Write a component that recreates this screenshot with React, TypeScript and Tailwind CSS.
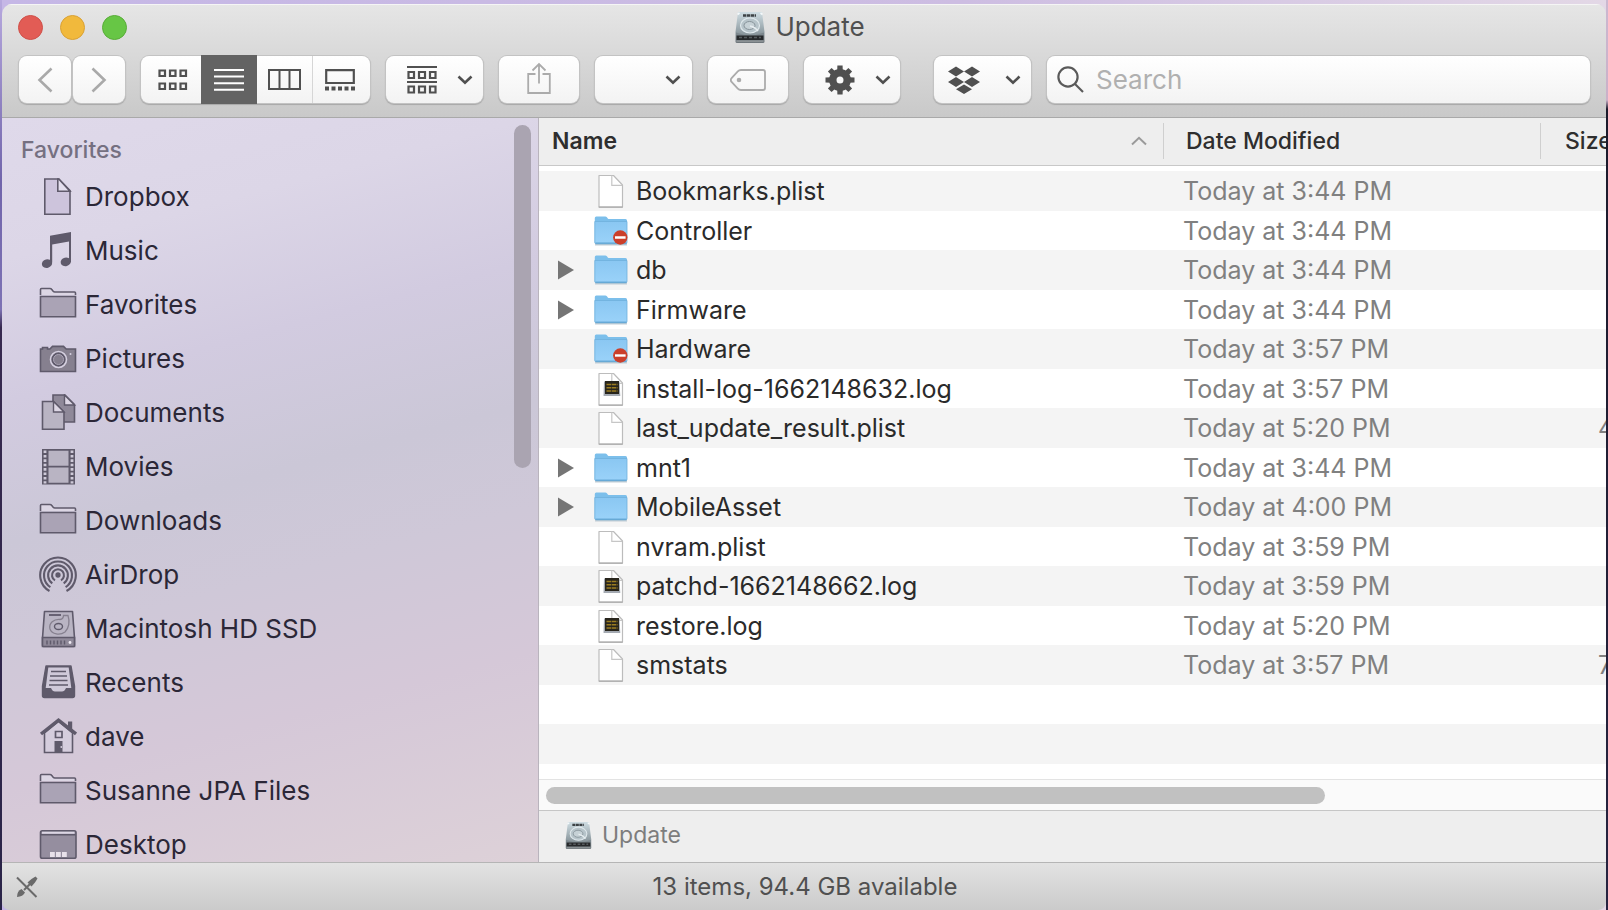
import type { ReactNode } from "react";
import clsx from "clsx";

type FileKind = "doc" | "folder" | "locked" | "log";

interface FileRow {
  name: string;
  kind: FileKind;
  date: string;
  size?: string;
}

const files: FileRow[] = [
  { name: "Bookmarks.plist", kind: "doc", date: "Today at 3:44 PM" },
  { name: "Controller", kind: "locked", date: "Today at 3:44 PM" },
  { name: "db", kind: "folder", date: "Today at 3:44 PM" },
  { name: "Firmware", kind: "folder", date: "Today at 3:44 PM" },
  { name: "Hardware", kind: "locked", date: "Today at 3:57 PM" },
  { name: "install-log-1662148632.log", kind: "log", date: "Today at 3:57 PM" },
  { name: "last_update_result.plist", kind: "doc", date: "Today at 5:20 PM", size: "4" },
  { name: "mnt1", kind: "folder", date: "Today at 3:44 PM" },
  { name: "MobileAsset", kind: "folder", date: "Today at 4:00 PM" },
  { name: "nvram.plist", kind: "doc", date: "Today at 3:59 PM" },
  { name: "patchd-1662148662.log", kind: "log", date: "Today at 3:59 PM" },
  { name: "restore.log", kind: "log", date: "Today at 5:20 PM" },
  { name: "smstats", kind: "doc", date: "Today at 3:57 PM", size: "7" },
];

/* ---------- sidebar icons, all on a 38px box ---------- */

const line = "#5f5a6b";
const fill = "#aaa3b5";

const folderShape = (
  <>
    <path d="M1.5 9V3.5q0-1 1-1h8.5q1 0 1.6.8l1.6 2q.6.7 1.6.7h19.7q1 0 1 1V9" fill="#dcd6e4" stroke={line} strokeWidth="1.6" />
    <path d="M1.5 10.5h35v20.3H1.5z" fill={fill} stroke={line} strokeWidth="1.6" />
  </>
);

const sidebar: { label: string; icon: ReactNode }[] = [
  {
    label: "Dropbox",
    icon: (
      <>
        <path d="M5.8 1h14L31 12.5v23.7H5.8z" fill="#cdc4dc" stroke={line} strokeWidth="1.6" />
        <path d="M18.8 1v12.3H31L19.8 1z" fill="#e4dfee" stroke={line} strokeWidth="1.6" />
      </>
    ),
  },
  {
    label: "Music",
    icon: (
      <>
        <path d="M11 3.8 32 0v30h-2V9.6L13.2 12.4v18H11z" fill={line} />
        <ellipse cx="8" cy="31.6" rx="5.2" ry="4.3" fill={line} transform="rotate(-15 8 31.6)" />
        <ellipse cx="26.8" cy="29.8" rx="5.2" ry="4.3" fill={line} transform="rotate(-15 26.8 29.8)" />
      </>
    ),
  },
  { label: "Favorites", icon: folderShape },
  {
    label: "Pictures",
    icon: (
      <>
        <path d="M1.5 9h2V7.5h5V9h2.4l2.6-2.6h11L27.2 9h9.3v22.5h-35z" fill="#86808f" stroke={line} strokeWidth="1.6" />
        <circle cx="19.5" cy="19.5" r="8" fill={line} stroke="#d6d0e0" strokeWidth="1.6" />
        <circle cx="19.5" cy="19.5" r="5" fill="#86808f" stroke="#aaa3b5" strokeWidth="1" />
        <circle cx="31.5" cy="14" r="1" fill="#d6d0e0" />
      </>
    ),
  },
  {
    label: "Documents",
    icon: (
      <>
        <path d="M14 1h12l9.5 9.5V28H14z" fill="#8f8999" stroke={line} strokeWidth="1.6" />
        <path d="M25.5 1v10h10z" fill="#dcd6e4" stroke={line} strokeWidth="1.4" />
        <path d="M3.5 7.5h11L25 18v17.2H3.5z" fill="#b9b4c3" stroke={line} strokeWidth="1.6" />
        <path d="M14.5 7.5V18H25z" fill="#dcd6e4" stroke={line} strokeWidth="1.4" />
      </>
    ),
  },
  {
    label: "Movies",
    icon: (
      <>
        <path d="M3 1h33v35.500H3z" fill={line} />
        <path d="M9.500 2.800h20v15h-20zM9.500 19.600h20v15.100h-20z" fill="#b9b4c3" />
        <path d="M6 2.500v33M33 2.500v33" stroke="#cfcad9" strokeWidth="2.8" strokeDasharray="2.6 1.8" />
      </>
    ),
  },
  { label: "Downloads", icon: folderShape },
  {
    label: "AirDrop",
    icon: (
      <g fill="none" stroke={line} strokeWidth="2.1">
        <circle cx="19" cy="19" r="1.6" fill={line} />
        <path d="M16 24.4a6 6 0 1 1 6 0" />
        <path d="M13.300 27.4a9.900 9.900 0 1 1 11.400 0" />
        <path d="M11.400 31.200a14 14 0 1 1 15.200 0" />
        <path d="M10.500 35a17.800 17.800 0 1 1 17 0" />
      </g>
    ),
  },
  {
    label: "Macintosh HD SSD",
    icon: (
      <>
        <path d="M5.500 1.500h28l2 26.500v7.500q0 1-1 1h-30q-1 0-1-1V28z" fill="#b9b4c3" stroke={line} strokeWidth="1.6" strokeLinejoin="round" />
        <path d="M3.500 27.500h32v9h-32z" fill="#8f8999" stroke={line} strokeWidth="1.6" />
        <path d="M8 30.500v4M11.500 30.500v4M15 30.500v4M18.500 30.500v4M22 30.500v4M25.500 30.500v4" stroke={line} strokeWidth="1.4" />
        <circle cx="31" cy="32.5" r="1.4" fill="#efeaf3" />
        <path d="M10 5h12" stroke={line} strokeWidth="1.8" />
        <path d="M29 5.500c2 6 1 13-3 16.500-5 3.500-13 2.500-15-3-1.500-6 4-10 10-9.500 3-.4 3.500-2 3.500-4z" fill="none" stroke="#86808f" strokeWidth="1.3" />
        <ellipse cx="19.5" cy="16.5" rx="4" ry="3" fill="none" stroke={line} strokeWidth="1.4" />
      </>
    ),
  },
  {
    label: "Recents",
    icon: (
      <>
        <path d="M7 2h25l3.500 20v9.500q0 2-2 2h-28q-2 0-2-2V22z" fill={line} stroke={line} strokeWidth="1.4" strokeLinejoin="round" />
        <path d="M9.300 3.500h20.400l2.600 20.500H27q-1.500 3.500-4 3.500h-7q-2.500 0-4-3.500H6.700z" fill="#cfc9d9" />
        <path d="M12 7.500h15M11 12h17M10.500 16.500h18M10 21h19" stroke={line} strokeWidth="1.6" />
      </>
    ),
  },
  {
    label: "dave",
    icon: (
      <>
        <path d="M5.500 15 19.500 3.500 33.500 15v19.500h-28z" fill="#d5cddd" stroke={line} strokeWidth="1.6" />
        <path d="M29 3.500h4.200V12L29 8.500z" fill={line} />
        <path d="M2 16 19.500 2.200 37 16" fill="none" stroke={line} strokeWidth="3.4" />
        <path d="M16.500 13.500h6.500v6h-6.500z" fill="none" stroke={line} strokeWidth="1.7" />
        <path d="M15.500 23h8v11.500h-8z" fill={line} />
        <circle cx="22.3" cy="29" r=".9" fill="#d5cddd" />
      </>
    ),
  },
  { label: "Susanne JPA Files", icon: folderShape },
  {
    label: "Desktop",
    icon: (
      <>
        <rect x="1.5" y="4.8" width="35.5" height="27.5" rx="1.8" fill="#958e9f" stroke={line} strokeWidth="1.6" />
        <path d="M3 6.800h32.500" stroke="#dcd6e4" strokeWidth="2" />
        <path d="M2 8.800h34.500" stroke={line} strokeWidth="1.4" />
        <path d="M11 26h4.800v5H11zM17 26h4.800v5H17zM23 26h4.800v5H23z" fill="#e8e1ea" />
      </>
    ),
  },
];

/* ---------- file and drive icons ---------- */

const DriveIcon = ({ className }: { className: string }) => (
  <svg viewBox="0 0 30 33" className={className} aria-hidden="true">
    <defs>
      <linearGradient id="drive" x1="0" y1="0" x2="0" y2="1">
        <stop offset="0" stopColor="#cfdde3" />
        <stop offset=".6" stopColor="#95a2a8" />
        <stop offset="1" stopColor="#6e767b" />
      </linearGradient>
    </defs>
    <path d="M3 1h24l2.500 20v9.500q0 1.500-1.500 1.500H2Q.5 32 .5 30.500V21z" fill="url(#drive)" />
    <path d="M2.500 3.500 4.500 2M27.500 3.500l-2-1.500" stroke="#f4f8fa" strokeWidth="1.6" />
    <ellipse cx="15" cy="14.5" rx="9.5" ry="7.5" fill="#b7c4ca" stroke="#dfe8ec" strokeWidth="1.2" />
    <ellipse cx="14.500" cy="14.500" rx="5.500" ry="4" fill="#c6d1d6" stroke="#87939a" strokeWidth="1" />
    <path d="M15 15q5 1 8 5" fill="none" stroke="#e6edf0" strokeWidth="1.6" />
    <path d="M8 4.500h13" stroke="#3d4245" strokeWidth="2.6" strokeDasharray="3.4 .6" />
    <path d="M1 21.500q14 5.500 28 0v3.500H1z" fill="#7b868c" />
    <path d="M1.500 24.500h27v4.500h-27z" fill="#26282a" />
    <path d="M4 26.500h22" stroke="#565b5e" strokeWidth="1.6" strokeDasharray="3 2" />
    <path d="M1.500 30.300h27" stroke="#8b9194" strokeWidth="1.6" />
  </svg>
);

const FileIcon = ({ kind }: { kind: FileKind }) => {
  if (kind === "folder" || kind === "locked") {
    return (
      <svg viewBox="0 0 34 34" className="size-[34px] shrink-0" aria-hidden="true">
        <defs>
          <linearGradient id="folder" x1="0" y1="0" x2="0" y2="1">
            <stop offset="0" stopColor="#8ac7f2" />
            <stop offset="1" stopColor="#9ad2f9" />
          </linearGradient>
        </defs>
        <path d="M1 30.500h32" stroke="#c3cdd4" strokeWidth="2" />
        <path d="M.8 4q0-1.500 1.500-1.500h9q1 0 1.600.8l.9 1.200q.5.600 1.500.600h16.200q1.500 0 1.500 1.500V29H.8z" fill="#7cbfeb" />
        <path d="M.8 7.500h32.200v20.800q0 1.500-1.500 1.500H2.300q-1.500 0-1.500-1.500z" fill="url(#folder)" stroke="#6fb0dc" strokeWidth=".8" />
        <path d="M1.500 29.200h31" stroke="#5fa3d1" strokeWidth="1.2" />
        {kind === "locked" && (
          <>
            <circle cx="26.3" cy="23.5" r="7.2" fill="#cb3f2b" />
            <path d="M21 23.500h10.600" stroke="#fff" strokeWidth="2.4" />
          </>
        )}
      </svg>
    );
  }
  return (
    <svg viewBox="0 0 34 34" className="size-[34px] shrink-0" aria-hidden="true">
      <path d="M5 1.500h14.500L28.500 11v22H5z" fill="#fff" stroke="#bcbcbc" strokeWidth="1.2" strokeLinejoin="round" />
      <path d="M4.800 33.200h23.900" stroke="#a9a9a9" strokeWidth="1.2" />
      <path d="M17.800 1.500v9.800h10.400" fill="none" stroke="#c6c6c6" strokeWidth="1.2" />
      {kind === "log" && (
        <>
          <path d="M10 9.500h15.500l.8 14.500H9.500z" fill="#a4aab2" />
          <path d="M11 9h14v13H11z" fill="#28251c" />
          <path d="M12.500 12.500h11M12.500 15.800h11M12.500 19.100h11" stroke="#9a7c20" strokeWidth="1.5" strokeDasharray="4.500 .6" />
        </>
      )}
    </svg>
  );
};

/* ---------- toolbar ---------- */

const buttonFace =
  "flex h-[47px] shrink-0 items-center rounded-lg bg-linear-to-b from-white to-[#f3f3f3] shadow-[0_0_0_1px_#c3c3c3,0_1px_1px_1px_#a8a8a8]";

const ToolButton = ({ label, className, children }: { label: string; className: string; children?: ReactNode }) => (
  <button type="button" aria-label={label} className={clsx(buttonFace, className)}>
    {children}
  </button>
);

const Chevron = () => (
  <svg viewBox="0 0 16 10" className="h-[10px] w-4" aria-hidden="true">
    <path d="M1.500 1.500 8 7.800l6.500-6.300" fill="none" stroke="#505050" strokeWidth="2.6" />
  </svg>
);

const gearTeeth = [0, 45, 90, 135, 180, 225, 270, 315];

const Toolbar = () => (
  <div className="flex gap-4 pt-[6px] pr-4 pb-[14px] pl-[17px]">
    <div className="flex gap-[2px]">
      <ToolButton label="Back" className="w-[52px] justify-center">
        <svg viewBox="0 0 16 26" className="h-[26px] w-4" aria-hidden="true">
          <path d="M14.500 1.500 2.500 13l12 11.500" fill="none" stroke="#a9a9a9" strokeWidth="2.6" />
        </svg>
      </ToolButton>
      <ToolButton label="Forward" className="w-[52px] justify-center">
        <svg viewBox="0 0 16 26" className="h-[26px] w-4" aria-hidden="true">
          <path d="m1.500 1.500 12 11.500-12 11.500" fill="none" stroke="#a9a9a9" strokeWidth="2.6" />
        </svg>
      </ToolButton>
    </div>

    <div className={buttonFace} role="group" aria-label="View">
      <button type="button" aria-label="Icons" className="flex h-full w-[60px] items-center justify-center pl-1">
        <svg viewBox="0 0 30 22" className="h-[22px] w-[30px]" fill="none" stroke="#505050" strokeWidth="2.2" aria-hidden="true">
          <path d="M1.500 1.500H7V7H1.500zM12 1.500h5.500V7H12zM22.500 1.500H28V7h-5.500zM1.500 14.500H7V20H1.500zM12 14.500h5.500V20H12zM22.500 14.500H28V20h-5.500z" />
        </svg>
      </button>
      <button type="button" aria-label="List" aria-pressed="true" className="flex h-[49px] w-14 items-center justify-center bg-[#636363]">
        <svg viewBox="0 0 30 22" className="h-[22px] w-[30px]" stroke="#fff" strokeWidth="2" aria-hidden="true">
          <path d="M0 1h30M0 7.600h30M0 14.200h30M0 20.800h30" />
        </svg>
      </button>
      <button type="button" aria-label="Columns" className="flex h-full w-14 items-center justify-center border-r border-[#d6d6d6]">
        <svg viewBox="0 0 33 21" className="h-[21px] w-[33px]" fill="none" stroke="#505050" strokeWidth="2" aria-hidden="true">
          <path d="M1 1h31v19H1zM11.500 1v19M21.500 1v19" />
        </svg>
      </button>
      <button type="button" aria-label="Gallery" className="flex h-full w-[57px] items-center justify-center pr-1">
        <svg viewBox="0 0 30 22" className="h-[22px] w-[30px]" fill="none" stroke="#505050" aria-hidden="true">
          <path d="M1.200 1.200h27.600v12.800H1.200z" strokeWidth="2.2" />
          <path d="M0 19.500h30" strokeWidth="3.8" strokeDasharray="4 2.500" />
        </svg>
      </button>
    </div>

    <ToolButton label="Arrange" className="w-[97px] gap-5 pl-[21px]">
      <svg viewBox="0 0 30 28" className="h-7 w-[30px]" fill="none" stroke="#505050" strokeWidth="2.2" aria-hidden="true">
        <path d="M0 1h30M0 16h30" />
        <path d="M1.500 6h5.500v6H1.500zM12 6h6v6h-6zM23 6h5.500v6H23zM1.500 20.500h5.500v6H1.500zM12 20.500h6v6h-6zM23 20.500h5.500v6H23z" />
      </svg>
      <Chevron />
    </ToolButton>

    <ToolButton label="Share" className="w-20 justify-center">
      <svg viewBox="0 0 24 32" className="mb-1 h-8 w-6" fill="none" stroke="#ababab" strokeWidth="1.8" aria-hidden="true">
        <path d="M8.500 12H1.200v19h21.600V12h-7.300M12 21.500V2M5.500 8.500 12 2l6.500 6.500" />
      </svg>
    </ToolButton>

    <ToolButton label="Quick menu" className="w-[97px] justify-end pr-[11px]">
      <Chevron />
    </ToolButton>

    <ToolButton label="Edit tags" className="w-20 justify-center">
      <svg viewBox="0 0 36 22" className="h-[22px] w-9" fill="none" stroke="#ababab" strokeWidth="1.8" aria-hidden="true">
        <path d="M11 1h22q2 0 2 2v16q0 2-2 2H11q-2 0-3.200-1.300l-6-6.500q-2-2.200 0-4.400l6-6.500Q9 1 11 1z" />
        <circle cx="9" cy="11" r="1.4" fill="#ababab" />
      </svg>
    </ToolButton>

    <ToolButton label="Actions" className="w-24 gap-5 pl-[21px]">
      <svg viewBox="-15 -15 30 30" className="size-[30px]" aria-hidden="true">
        {gearTeeth.map((angle) => (
          <path key={angle} d="M-2.800-9-2.600-14.500h5.200L2.800-9z" fill="#505050" transform={`rotate(${angle})`} />
        ))}
        <circle r="7.2" fill="none" stroke="#505050" strokeWidth="7.4" />
      </svg>
      <Chevron />
    </ToolButton>

    <ToolButton label="Dropbox" className="ml-[18px] w-[97px] gap-6 pl-[13px]">
      <svg viewBox="0 0 34 28" className="h-7 w-[34px]" fill="#505050" aria-hidden="true">
        <path d="M9 .5 17 5.500 9 10.500 1 5.500zM25 .5l8 5-8 5-8-5zM9 11l8 5-8 5-8-5zM25 11l8 5-8 5-8-5zM17 18.500l8 4.800-8 4.700-8-4.700z" />
      </svg>
      <Chevron />
    </ToolButton>

    <label className={clsx(buttonFace, "min-w-0 flex-1 gap-3 px-[10px]")}>
      <svg viewBox="0 0 27 27" className="size-[27px] shrink-0" fill="none" stroke="#5a5a5a" strokeWidth="2.2" aria-hidden="true">
        <circle cx="11" cy="11" r="9.6" />
        <path d="m18 18 8 8" />
      </svg>
      <input
        type="text"
        aria-label="Search"
        placeholder="Search"
        className="min-w-0 flex-1 bg-transparent text-[26px] leading-8 outline-none placeholder:text-[#b0b0b0]"
      />
    </label>
  </div>
);

const TitleBar = () => (
  <header className="shrink-0 border-b border-[#a9a9a9] bg-linear-to-b from-[#e6e6e6] to-[#c9c9c9] shadow-[inset_0_1px_0_#f5f5f5]">
    <div className="grid h-[46px] grid-cols-[1fr_auto_1fr] items-center px-4">
      <div className="flex gap-[17px]">
        <button type="button" aria-label="Close" className="size-[25px] rounded-full border border-[#cf5049] bg-[#e25c55]" />
        <button type="button" aria-label="Minimize" className="size-[25px] rounded-full border border-[#d9a135] bg-[#f1b93c]" />
        <button type="button" aria-label="Zoom" className="size-[25px] rounded-full border border-[#58ad38] bg-[#67c645]" />
      </div>
      <h1 className="flex items-center gap-[10px] pr-2 text-[26px] leading-8 text-[#505050]">
        <DriveIcon className="h-[33px] w-[30px]" />
        Update
      </h1>
    </div>
    <Toolbar />
  </header>
);

const Sidebar = () => (
  <nav
    aria-label="Favorites"
    className="flex w-[537px] shrink-0 overflow-hidden border-r border-[#b9b4bd] bg-[linear-gradient(165deg,#dfd9ea_0%,#dcd6e7_16%,#d2cbe0_32%,#cbc7d7_48%,#cfc8d8_60%,#d5c8d8_76%,#ddd1d8_100%)]"
  >
    <div className="min-w-0 flex-1">
      <h2 className="px-[19px] pt-[18px] text-[23px] leading-7 font-medium text-[#757081]">Favorites</h2>
      <ul className="pt-[6px] text-[26px] leading-8 text-[#2b2737]">
        {sidebar.map((item) => (
          <li key={item.label}>
            <a href="#" className="flex h-[54px] items-center gap-2 pl-[37px]">
              <svg viewBox="0 0 38 38" className="size-[38px]" aria-hidden="true">
                {item.icon}
              </svg>
              {item.label}
            </a>
          </li>
        ))}
      </ul>
    </div>
    <div className="w-[24px] pt-[7px]">
      <div className="h-[343px] w-[17px] rounded-full bg-[#aaa4b1]" />
    </div>
  </nav>
);

const FileList = () => (
  <div className="min-h-0 flex-1 overflow-hidden bg-white">
    <table className="w-full table-fixed border-collapse text-left whitespace-nowrap">
      <colgroup>
        <col />
        <col className="w-[377px]" />
        <col className="w-[65px]" />
      </colgroup>
      <thead className="border-b border-[#c8c8c8] bg-[#eeeeee] text-[23px] leading-9 text-[#2e2e2e]">
        <tr className="h-[47px]">
          <th scope="col" className="py-[5px] pl-[13px] font-semibold" aria-sort="ascending">
            <div className="flex items-center justify-between border-r border-[#cfcfcf] pr-4">
              Name
              <svg viewBox="0 0 16 10" className="h-[10px] w-4" aria-hidden="true">
                <path d="M1 8.500 8 1.800l7 6.700" fill="none" stroke="#9a9a9a" strokeWidth="2" />
              </svg>
            </div>
          </th>
          <th scope="col" className="py-[5px] font-medium">
            <div className="border-r border-[#cfcfcf] pl-[22px]">Date Modified</div>
          </th>
          <th scope="col" className="pl-[24px] font-medium">Size</th>
        </tr>
      </thead>
      <tbody className="text-[25px] leading-8">
        <tr className="h-[6px]" aria-hidden="true">
          <td colSpan={3} />
        </tr>
        {files.map((file, i) => (
          <tr key={file.name} className={i % 2 === 0 ? "h-10 bg-[#f4f4f4]" : "h-[39px]"}>
            <td className="p-0 text-[#2a2a2a]">
              <div className="flex items-center gap-2 pl-[19px]">
                {file.kind === "folder" ? (
                  <button type="button" aria-label={`Expand ${file.name}`} className="mr-3 w-4">
                    <svg viewBox="0 0 16 20" className="h-5 w-4" aria-hidden="true">
                      <path d="M0 .5 16 10 0 19.500z" fill="#757575" />
                    </svg>
                  </button>
                ) : (
                  <span className="mr-3 w-4" />
                )}
                <FileIcon kind={file.kind} />
                {file.name}
              </div>
            </td>
            <td className="p-0 pl-[19px] text-[#808080]">{file.date}</td>
            <td className="p-0 pl-[57px] text-[#808080]">{file.size}</td>
          </tr>
        ))}
        <tr className="h-[39px]" aria-hidden="true">
          <td colSpan={3} />
        </tr>
        <tr className="h-10 bg-[#f4f4f4]" aria-hidden="true">
          <td colSpan={3} />
        </tr>
      </tbody>
    </table>
  </div>
);

export default function App() {
  return (
    <div className="h-screen bg-[linear-gradient(90deg,#c5b7e6,#cdbde2_60%,#e3d8e6)] font-['Inter','Liberation_Sans',sans-serif]">
      <div className="h-full bg-[linear-gradient(180deg,#9f90d060_0%,#7165ab_20%,#7d72b4_34%,#37294f_36%,#2a2448_100%)] bg-[length:2px_100%] bg-no-repeat">
        <div className="h-full bg-[linear-gradient(180deg,#cbb8d0_0%,#cbb0c8_11%,#1b1a2b_12%,#262340_100%)] bg-[length:2px_100%] bg-right bg-no-repeat px-[2px] pt-1">
          <div className="flex h-full flex-col overflow-hidden rounded-t-[10px] rounded-b-lg">
            <TitleBar />
            <div className="flex min-h-0 flex-1">
              <Sidebar />
              <main className="flex min-w-0 flex-1 flex-col overflow-hidden">
                <FileList />
                <div className="shrink-0 border-t border-[#e3e3e3] bg-[#fafafa] px-[7px] pt-[7px] pb-[6px]">
                  <div className="h-[17px] w-[74%] rounded-full bg-[#c1c1c1]" />
                </div>
                <div className="flex h-[52px] shrink-0 items-center gap-[10px] border-t border-[#c6c6c6] bg-[#eeeeee] pb-[3px] pl-[26px] text-[23px] leading-7 text-[#7d7d7d]">
                  <DriveIcon className="h-[29px] w-[27px]" />
                  Update
                </div>
              </main>
            </div>
            <footer className="grid h-12 shrink-0 grid-cols-[1fr_auto_1fr] items-center border-t border-[#b5b5b5] bg-linear-to-b from-[#e2e2e2] to-[#cbcbcb] pl-[14px] text-[24px] leading-7 text-[#505050]">
              <svg viewBox="0 0 22 22" className="size-[22px]" aria-hidden="true">
                <path d="M1 1.500 20.500 21" stroke="#6a6a6a" strokeWidth="2" />
                <path d="m8 14 8-8" stroke="#6a6a6a" strokeWidth="2" />
                <path d="m11.500 6.500 4-3.500 4-2.500 2 2-2.500 4-3.500 4z" fill="#6a6a6a" />
                <path d="M1 21q0-6 4.500-8l3.500 3.500Q7 20.500 1 21z" fill="#6a6a6a" />
              </svg>
              <p className="pr-3">13 items, 94.4 GB available</p>
            </footer>
          </div>
        </div>
      </div>
    </div>
  );
}
